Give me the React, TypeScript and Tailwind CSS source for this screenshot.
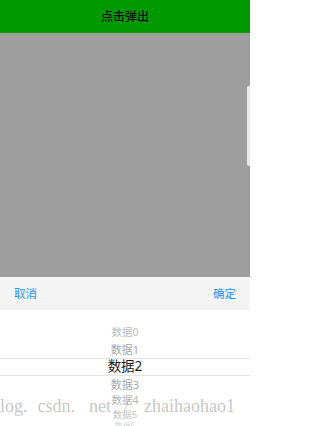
const items = [
  { label: "数据0", row: "h-[15px] text-[10.5px] text-[#bdbdbd]" },
  { label: "数据1", row: "h-[18px] text-[11px] text-[#a8a8a8]" },
  {
    label: "数据2",
    row: "h-[18px] text-[13.5px] text-[#1a1a1a] border-y border-[#e6e6e6]",
  },
  { label: "数据3", row: "h-[17px] text-[11px] text-[#a8a8a8]" },
  { label: "数据4", row: "h-[15px] text-[10.5px] text-[#b5b5b5]" },
  { label: "数据5", row: "h-[13px] text-[9.5px] text-[#c4c4c4]" },
  { label: "数据6", row: "h-[10px] text-[8px] text-[#d6d6d6]" },
];

function Watermark() {
  return (
    <div
      className="pointer-events-none absolute left-0 top-[397px] flex h-[18px] items-start whitespace-nowrap text-[18px] leading-none text-[rgba(150,150,150,0.55)]"
      style={{ fontFamily: '"Liberation Serif", serif' }}
    >
      <span>log.</span>
      <span className="ml-[10px]">csdn.</span>
      <span className="ml-[14px]">net</span>
      <span className="ml-[13px]">/</span>
      <span className="ml-[15px]">zhaihaohao1</span>
    </div>
  );
}

export default function App() {
  return (
    <div
      className="relative flex h-[426px] w-[250px] flex-col overflow-hidden bg-white"
      style={{ fontFamily: '"Noto Sans", "Noto Sans CJK SC", sans-serif' }}
    >
      <header className="flex h-[33px] shrink-0 items-center justify-center bg-[#009a00]">
        <span className="text-[12px] font-medium text-[#111]">点击弹出</span>
      </header>

      <div className="relative flex-1 bg-[#9e9e9e]">
        <div className="absolute right-0 top-[53px] h-[80px] w-[3px] rounded-l-[2px] bg-[#e9e9e9]" />
      </div>

      <div className="flex h-[33px] shrink-0 items-center justify-between bg-[#f4f4f4] px-[14px] text-[11.5px] text-[#2196f3]">
        <button type="button">取消</button>
        <button type="button">确定</button>
      </div>

      <div className="flex h-[116px] shrink-0 flex-col overflow-hidden pt-[15px]">
        {items.map((it) => (
          <div
            key={it.label}
            className={`flex shrink-0 items-center justify-center leading-none ${it.row}`}
          >
            {it.label}
          </div>
        ))}
      </div>

      <Watermark />
    </div>
  );
}
